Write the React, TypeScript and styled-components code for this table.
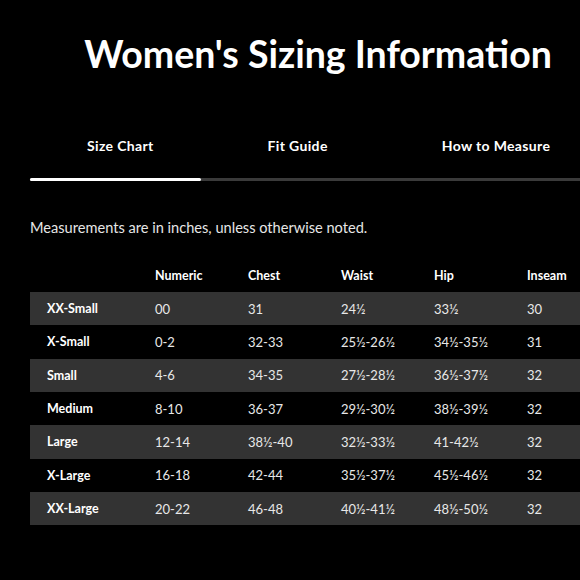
import React from "react";
import styled, { createGlobalStyle } from "styled-components";

const Global = createGlobalStyle`
  html, body {
    margin: 0;
    padding: 0;
    background: #000;
    overflow: hidden;
  }
  body {
    font-family: "Lato", "Open Sans", sans-serif;
    color: #fff;
  }
`;

const Page = styled.div`
  width: 576px;
  padding-left: 30px;
  background: #000;
  height: 580px;
`;

const Title = styled.h1`
  margin: 0;
  padding-top: 32px;
  font-size: 37.5px;
  line-height: 44px;
  font-weight: 700;
  text-align: center;
  color: #fff;
  letter-spacing: 0;
`;

const TabBar = styled.div`
  display: flex;
  margin-top: 60px;
  height: 42px;
`;

const Tab = styled.div<{ $active?: boolean }>`
  padding: 0 57px;
  font-size: 14px;
  font-weight: 700;
  letter-spacing: 0.35px;
  line-height: 20px;
  color: #fff;
  white-space: nowrap;
`;

const Track = styled.div`
  height: 3px;
  background: #3a3a3a;
  display: flex;
`;

const Indicator = styled.div`
  height: 100%;
  background: #fff;
  border-radius: 2px;
`;

const Note = styled.p`
  margin: 37px 0 0;
  font-size: 14.6px;
  line-height: 20px;
  color: #e6e6e6;
`;

const Table = styled.table`
  margin-top: 20px;
  width: 573px;
  border-collapse: collapse;
  table-layout: fixed;
`;

const HeadCell = styled.th`
  height: 34px;
  padding: 0 0 0 17px;
  text-align: left;
  font-size: 12.5px;
  font-weight: 700;
  color: #fff;
`;

const Row = styled.tr<{ $shaded: boolean }>`
  height: 33.33px;
  background: ${(p) => (p.$shaded ? "#333333" : "#000")};
`;

const NameCell = styled.td`
  padding: 0 0 0 17px;
  font-size: 12.5px;
  font-weight: 700;
  color: #fff;
`;

const Cell = styled.td`
  padding: 0 0 0 17px;
  font-size: 13px;
  font-weight: 400;
  color: #e8e8e8;
`;

const columns = ["Numeric", "Chest", "Waist", "Hip", "Inseam"];

const rows: [string, string, string, string, string, string][] = [
  ["XX-Small", "00", "31", "24½", "33½", "30"],
  ["X-Small", "0-2", "32-33", "25½-26½", "34½-35½", "31"],
  ["Small", "4-6", "34-35", "27½-28½", "36½-37½", "32"],
  ["Medium", "8-10", "36-37", "29½-30½", "38½-39½", "32"],
  ["Large", "12-14", "38½-40", "32½-33½", "41-42½", "32"],
  ["X-Large", "16-18", "42-44", "35½-37½", "45½-46½", "32"],
  ["XX-Large", "20-22", "46-48", "40½-41½", "48½-50½", "32"],
];

export default function App() {
  return (
    <>
      <Global />
      <Page>
        <Title>Women's Sizing Information</Title>
        <TabBar>
          <Tab $active>Size Chart</Tab>
          <Tab>Fit Guide</Tab>
          <Tab>How to Measure</Tab>
        </TabBar>
        <Track>
          <Indicator style={{ width: 171 }} />
        </Track>
        <Note>Measurements are in inches, unless otherwise noted.</Note>
        <Table>
          <colgroup>
            <col style={{ width: 108 }} />
            {columns.map((c) => (
              <col key={c} />
            ))}
          </colgroup>
          <thead>
            <tr>
              <HeadCell />
              {columns.map((c) => (
                <HeadCell key={c}>{c}</HeadCell>
              ))}
            </tr>
          </thead>
          <tbody>
            {rows.map((r, i) => (
              <Row key={r[0]} $shaded={i % 2 === 0}>
                <NameCell>{r[0]}</NameCell>
                {r.slice(1).map((v, j) => (
                  <Cell key={j}>{v}</Cell>
                ))}
              </Row>
            ))}
          </tbody>
        </Table>
      </Page>
    </>
  );
}
